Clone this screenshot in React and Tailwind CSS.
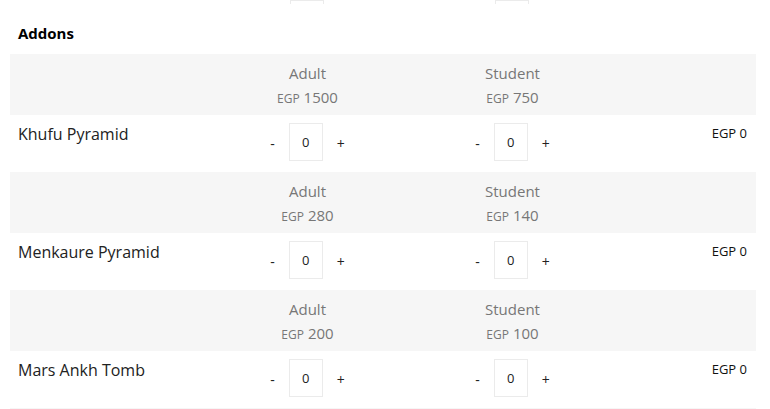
import React from 'react';

const addons = [
  { name: 'Khufu Pyramid', adult: 1500, student: 750 },
  { name: 'Menkaure Pyramid', adult: 280, student: 140 },
  { name: 'Mars Ankh Tomb', adult: 200, student: 100 },
];

const cols = 'grid grid-cols-[195px_205px_205px_1fr] items-start';

function Counter() {
  return (
    <div className="flex items-center justify-center gap-[14px] pt-[8px]">
      <button className="text-[14px] leading-none text-[#222] mt-[3px]">-</button>
      <div className="w-[34px] h-[38px] border border-[#ebebeb] flex items-center justify-center text-[13px] text-[#222] pt-[1px]">
        0
      </div>
      <button className="text-[14px] leading-none text-[#222] mt-[3px]">+</button>
    </div>
  );
}

function PriceHead({ label, price }) {
  return (
    <div className="flex flex-col items-center pt-[7px] text-[#777]">
      <span className="text-[15px] leading-[24px]">{label}</span>
      <span className="text-[15px] leading-[24px]">
        <span className="text-[12px]">EGP</span> {price}
      </span>
    </div>
  );
}

export default function App() {
  return (
    <div className="bg-white w-[770px] min-h-[409px] overflow-hidden" style={{ fontFamily: '"Open Sans", "Liberation Sans", sans-serif' }}>
      <div className="w-[746px] ml-[10px]">
        {/* tail of the previous section */}
        <div className="grid grid-cols-[195px_205px_205px_1fr] h-[4px] overflow-hidden items-end">
          <div />
          <div className="flex justify-center">
            <div className="w-[34px] h-[38px] border border-[#ebebeb] -ml-[1px]" />
          </div>
          <div className="flex justify-center">
            <div className="w-[34px] h-[38px] border border-[#ebebeb] -ml-[1px]" />
          </div>
          <div />
        </div>

        <h3 className="mt-[19px] mb-[11px] px-[8px] text-[15px] leading-[20px] font-bold text-black">Addons</h3>

        {addons.map((a) => (
          <div key={a.name}>
            <div className={`${cols} h-[61px] bg-[#f6f6f6]`}>
              <div />
              <PriceHead label="Adult" price={a.adult} />
              <PriceHead label="Student" price={a.student} />
              <div />
            </div>
            <div className={`${cols} h-[57px]`}>
              <div className="px-[8px] pt-[7px] text-[16px] leading-[24px] text-[#222]">{a.name}</div>
              <Counter />
              <Counter />
              <div className="pr-[9px] pt-[9px] text-right text-[13px] leading-[18px] text-[#111]">EGP 0</div>
            </div>
          </div>
        ))}
        <div className="h-[61px] bg-[#f6f6f6]" />
      </div>
    </div>
  );
}
